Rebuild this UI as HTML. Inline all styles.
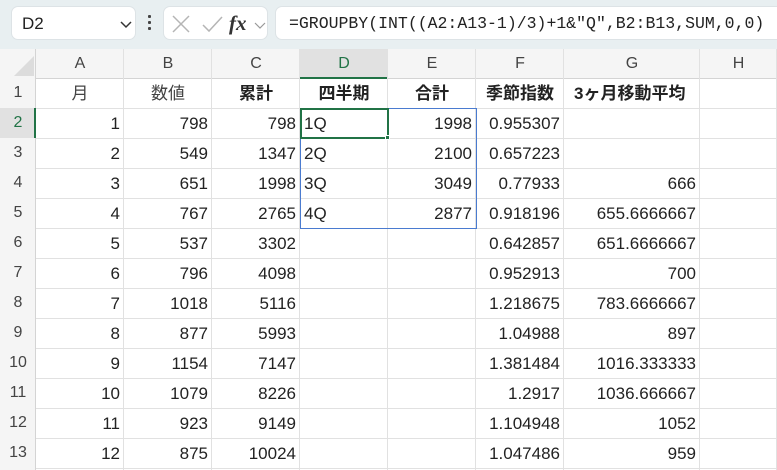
<!DOCTYPE html>
<html><head><meta charset="utf-8"><style>
*{margin:0;padding:0;box-sizing:border-box}
body{width:777px;height:470px;overflow:hidden;background:#fff;font-family:"Liberation Sans","Noto Sans CJK JP",sans-serif;position:relative;color:#222}
.top{position:absolute;left:0;top:0;width:777px;height:49px;background:#e8eff1}
.box{position:absolute;background:#fff;border:1px solid #dde3e6;border-radius:7px}
.c{position:absolute;height:30px;line-height:30px;font-size:17px;padding:0 4px;white-space:nowrap;overflow:hidden}
.r{text-align:right}.m{text-align:center}.b{font-weight:bold}
</style></head><body>
<div class="top"></div>
<div class="box" style="left:11px;top:6px;width:125px;height:34px"><span style="position:absolute;left:10px;top:7px;font-size:17px">D2</span>
<svg style="position:absolute;left:108px;top:14px" width="12" height="8"><path d="M1 1l5 5 5-5" fill="none" stroke="#333" stroke-width="1.5"/></svg></div>
<div style="position:absolute;left:148px;top:15px;width:3px;height:3px;background:#444;box-shadow:0 6px #444,0 12px #444;border-radius:1px"></div>
<div class="box" style="left:163px;top:6px;width:105px;height:34px">
<svg style="position:absolute;left:6px;top:6px" width="60" height="22"><path d="M3 3l16 16M19 3L3 19" stroke="#b5b5b5" stroke-width="1.5" fill="none"/><path d="M33 12l6 6 13-14" stroke="#b5b5b5" stroke-width="1.5" fill="none"/></svg>
<span style="position:absolute;left:65px;top:4px;font-family:'Liberation Serif',serif;font-style:italic;font-weight:bold;font-size:21px;color:#333">fx</span>
<svg style="position:absolute;left:90px;top:15px" width="12" height="8"><path d="M1 1l5 5 5-5" fill="none" stroke="#999" stroke-width="1.2"/></svg></div>
<div class="box" style="left:275px;top:6px;width:510px;height:34px"><span style="position:absolute;left:13px;top:7px;font-family:'Liberation Mono',monospace;font-size:16.5px">=GROUPBY(INT((A2:A13-1)/3)+1&amp;"Q",B2:B13,SUM,0,0)</span></div>

<div style="position:absolute;left:0;top:49px;width:777px;height:30px;background:#f5f5f5;border-bottom:1px solid #d4d4d4"></div>
<div style="position:absolute;left:0;top:49px;width:36px;height:421px;background:#f5f5f5;border-right:1px solid #d4d4d4"></div>
<svg style="position:absolute;left:14px;top:56px" width="20" height="20"><path d="M20 0V20H0Z" fill="#dcdcdc"/></svg>
<div style="position:absolute;left:300px;top:49px;width:88px;height:30px;background:#e1e1e1;border-bottom:2px solid #217346"></div>
<div style="position:absolute;left:0;top:108px;width:36px;height:30px;background:#e1e1e1;border-right:2px solid #217346"></div>
<div id="g"></div>
<div style="position:absolute;left:300px;top:108px;width:177px;height:121px;border:1px solid #4a7bd0"></div>
<div style="position:absolute;left:300px;top:108px;width:89px;height:31px;border:2px solid #217346"></div>
<div style="position:absolute;left:385px;top:135px;width:5px;height:5px;background:#217346;border:1px solid #fff"></div>
<script>
var L=[36,124,212,300,388,476,564,700,777],H="ABCDEFGH",g="";
for(var i=0;i<8;i++){g+='<div style="position:absolute;left:'+(L[i+1]-1)+'px;top:49px;width:1px;height:421px;background:#e1e1e1"></div>';
g+='<div class="c m" style="left:'+L[i]+'px;top:49px;width:'+(L[i+1]-L[i])+'px;font-size:16px;color:'+(i==3?'#217346':'#444')+'">'+H[i]+'</div>';}
for(var r=1;r<=13;r++){var t=78+(r-1)*30;g+='<div style="position:absolute;left:36px;top:'+(t+30)+'px;width:741px;height:1px;background:#e1e1e1"></div>';
g+='<div class="c m" style="left:0;top:'+t+'px;width:36px;font-size:16px;color:'+(r==2?'#217346':'#444')+'">'+r+'</div>';}
var D=[["月","数値","累計","四半期","合計","季節指数","3ヶ月移動平均"],
[1,798,798,"1Q",1998,"0.955307",""],[2,549,1347,"2Q",2100,"0.657223",""],[3,651,1998,"3Q",3049,"0.77933",666],[4,767,2765,"4Q",2877,"0.918196","655.6666667"],
[5,537,3302,"","","0.642857","651.6666667"],[6,796,4098,"","","0.952913",700],[7,1018,5116,"","","1.218675","783.6666667"],[8,877,5993,"","","1.04988",897],
[9,1154,7147,"","","1.381484","1016.333333"],[10,1079,8226,"","","1.2917","1036.666667"],[11,923,9149,"","","1.104948",1052],[12,875,10024,"","","1.047486",959]];
for(var r=0;r<13;r++)for(var i=0;i<7;i++){var v=D[r][i];if(v==="")continue;var t=78+r*30+1;var cls="c ";
if(r==0)cls+=(i<2?"m":"m b");else cls+=(i==3?"":"r");
var st='left:'+L[i]+'px;top:'+t+'px;width:'+(L[i+1]-L[i])+'px;';
if(r==0&&i==6)st+='text-align:left;padding-left:10px;';
if(r==0&&i<2)st+='color:#444;';
g+='<div class="'+cls+'" style="'+st+'">'+v+'</div>';}
document.getElementById("g").innerHTML=g;
</script>
</body></html>
